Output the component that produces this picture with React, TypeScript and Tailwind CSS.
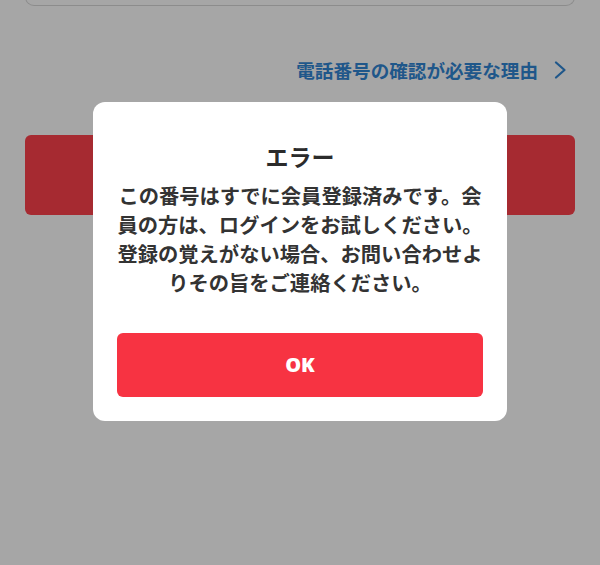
import React from 'react';

const lines = [
    'この番号はすでに会員登録済みです。会',
    '員の方は、ログインをお試しください。',
    '登録の覚えがない場合、お問い合わせよ',
    'りその旨をご連絡ください。',
];

const App: React.FC = () => {
    return (
        <div
            className="relative w-[600px] h-[565px] overflow-hidden bg-[#a6a6a6]"
            style={{ fontFamily: '"Noto Sans CJK JP", "Noto Sans", sans-serif' }}
        >
            {/* Page behind the overlay */}
            <div className="px-[25px] flex flex-col">
                <div className="h-[5px] -mt-[40px] pt-[40px] box-content border-[1.5px] border-t-0 border-[#8c8c8c] rounded-b-[9px]" />
                <div className="flex items-center justify-end mt-[49px] h-[30px] pr-[8px] gap-[16px] text-[#1f578a]">
                    <span className="text-[18.6px] font-bold">電話番号の確認が必要な理由</span>
                    <svg width="13" height="18" viewBox="0 0 13 18" fill="none">
                        <path d="M2 1.5 L10.5 9 L2 16.5" stroke="#1f578a" strokeWidth="2.2" strokeLinecap="round" strokeLinejoin="round" />
                    </svg>
                </div>
                <div className="mt-[50px] h-[80px] rounded-[6px] bg-[#a62a31]" />
            </div>

            {/* Error dialog */}
            <div className="absolute left-[93px] top-[102px] w-[414px] h-[319px] bg-white rounded-[12px] px-[22px] pt-[39px] flex flex-col">
                <h2 className="text-center text-[23px] leading-[30px] font-bold text-[#2b2b2b]">エラー</h2>
                <div className="mt-[10px] text-center text-[20.3px] leading-[29px] font-semibold text-[#333]">
                    {lines.map((line) => (
                        <p key={line} className="whitespace-nowrap">{line}</p>
                    ))}
                </div>
                <div className="px-[2px]">
                    <button className="mt-[36px] h-[64px] w-full rounded-[6px] bg-[#f73342] text-white text-[20px] font-extrabold" style={{ fontFamily: '"Open Sans", "Noto Sans", sans-serif' }}>
                        OK
                    </button>
                </div>
            </div>
        </div>
    );
};

export default App;
